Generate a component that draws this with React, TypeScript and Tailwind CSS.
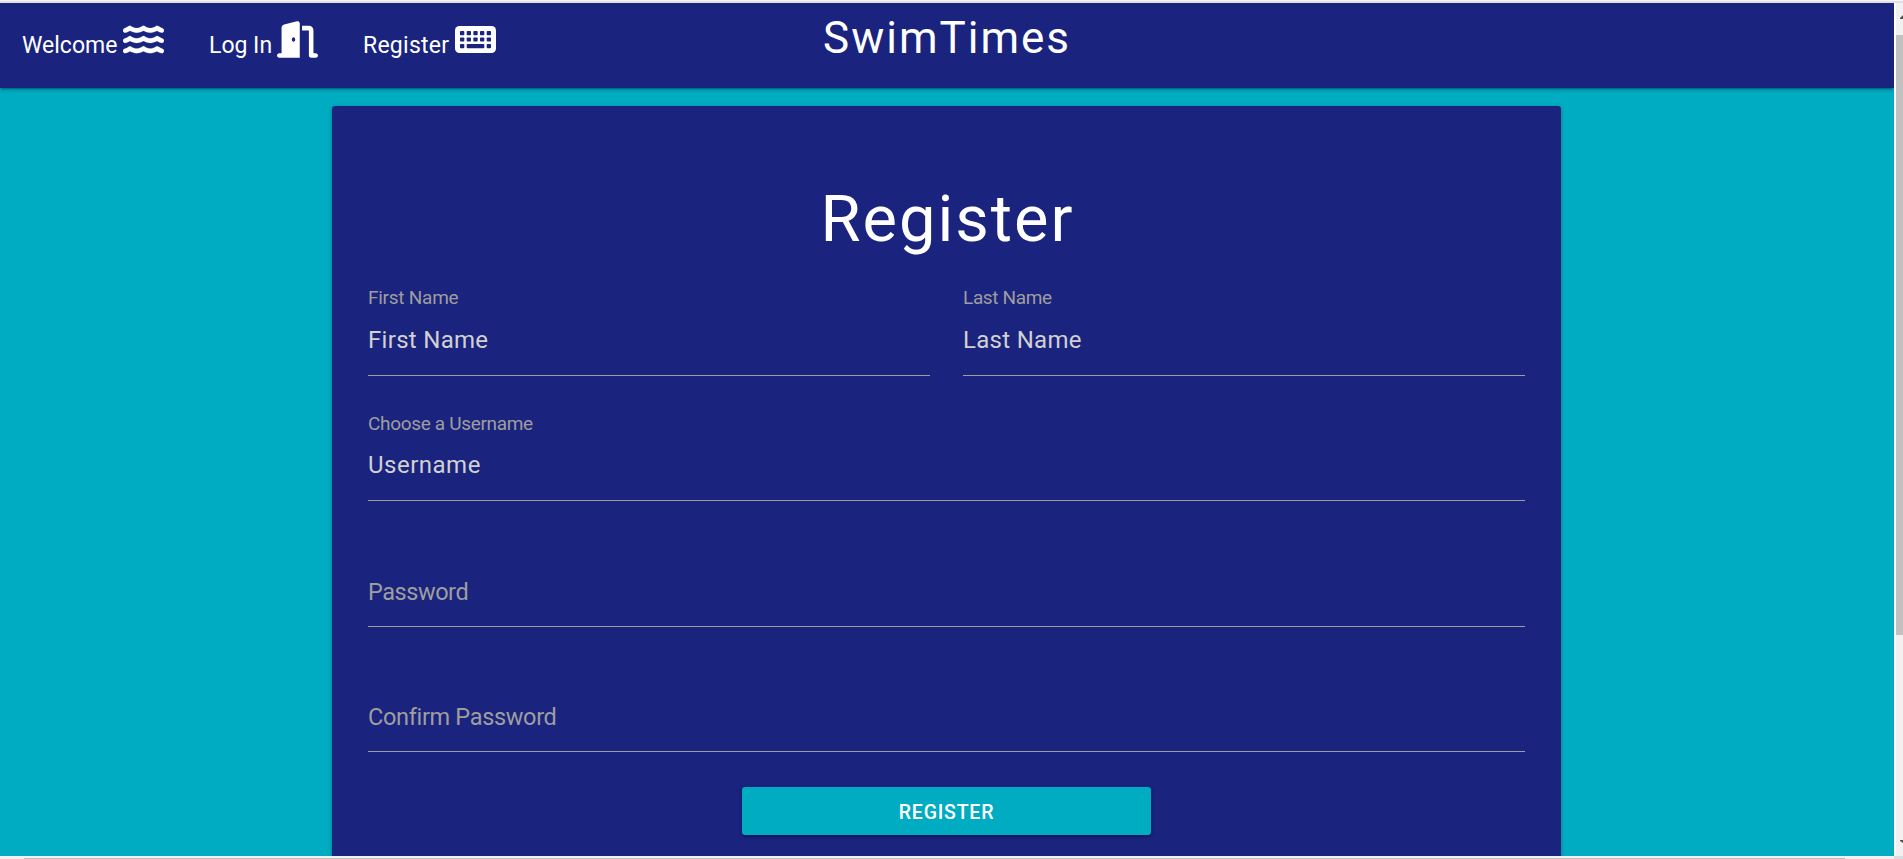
import type { ReactNode } from "react";
import { FaDoorOpen, FaWater } from "react-icons/fa6";

const KEY_COLUMNS = [5, 11.7, 18.35, 25, 31.7];

function KeyboardIcon() {
  return (
    <svg className="h-[37px] w-[41px]" viewBox="0 0 41 37">
      <rect x="0" y="5" width="41" height="27" rx="4.5" fill="currentColor" />
      <g fill="#1a237e">
        {KEY_COLUMNS.map((x) => (
          <g key={x}>
            <rect x={x} y="10.1" width="4.3" height="4.1" rx="0.8" />
            <rect x={x} y="16.5" width="4.3" height="4.1" rx="0.8" />
          </g>
        ))}
        <rect x="5" y="23.1" width="4.3" height="4.1" rx="0.8" />
        <rect x="11.7" y="23.1" width="17.6" height="4.1" rx="0.8" />
        <rect x="31.7" y="23.1" width="4.3" height="4.1" rx="0.8" />
      </g>
    </svg>
  );
}

function NavLink({ text, className, icon }: { text: string; className: string; icon: ReactNode }) {
  return (
    <a href="#" className={`flex items-start whitespace-nowrap text-[23px] leading-none ${className}`}>
      <span className="pt-[13px]">{text}</span>
      {icon}
    </a>
  );
}

type FieldProps = {
  label?: string;
  labelClass?: string;
  value: string;
  valueClass: string;
};

function Field({ label, labelClass = "", value, valueClass }: FieldProps) {
  return (
    <div className="flex flex-1 flex-col whitespace-nowrap border-b border-[#9e9e9e] leading-none">
      <div className={`text-[19px] text-[#9e9e9e] ${labelClass}`}>{label}</div>
      <div className={valueClass}>{value}</div>
    </div>
  );
}

export default function App() {
  return (
    <div className="flex h-[859px] w-[1903px] flex-col overflow-hidden bg-[#f1f1f1] font-['Roboto',sans-serif] text-white">
      <div className="h-[3px] shrink-0 border-t border-[#f5f5f5] bg-[#e0e0e0]" />
      <div className="flex h-[853px] shrink-0">
        <div className="flex w-[1894px] flex-col overflow-hidden bg-[#00acc1]">
          <nav className="z-10 flex h-[85px] shrink-0 items-start bg-[#1a237e] pt-[18px] shadow-[0_2px_2px_0_rgba(0,0,0,0.14),0_3px_1px_-2px_rgba(0,0,0,0.12),0_1px_5px_0_rgba(0,0,0,0.2)]">
            <NavLink text="Welcome" className="ml-[22px] w-[187px] gap-[6px]" icon={<FaWater className="h-[37px] w-[41px]" stroke="currentColor" strokeWidth={3} />} />
            <NavLink text="Log In" className="w-[154px] gap-[5px]" icon={<FaDoorOpen className="h-[37px] w-[41px]" />} />
            <NavLink text="Register" className="w-[460px] gap-[6px] tracking-[0.25px]" icon={<KeyboardIcon />} />
            <a href="#" className="-mt-[5px] text-[44px] leading-none tracking-[2px]">SwimTimes</a>
          </nav>
          <main className="ml-[332px] mt-[18px] flex h-[860px] w-[1229px] shrink-0 flex-col rounded-[3px] bg-[#1a237e] px-9 pt-20 shadow-[0_2px_2px_0_rgba(0,0,0,0.14),0_3px_1px_-2px_rgba(0,0,0,0.12),0_1px_5px_0_rgba(0,0,0,0.2)]">
            <h1 className="h-[102px] pl-[2px] pt-px text-center text-[65px] leading-none tracking-[2px]">Register</h1>
            <div className="flex h-[88px] gap-[33px]">
              <Field label="First Name" labelClass="h-10 tracking-[-0.25px]" value="First Name" valueClass="text-[24px] tracking-[0.3px] text-[#d1d1d1]" />
              <Field label="Last Name" labelClass="h-10 tracking-[-0.35px]" value="Last Name" valueClass="text-[24px] tracking-[0.3px] text-[#d1d1d1]" />
            </div>
            <div className="mt-[38px] flex h-[87px]">
              <Field label="Choose a Username" labelClass="h-[39px] tracking-[-0.33px]" value="Username" valueClass="text-[24px] tracking-[0.5px] text-[#d1d1d1]" />
            </div>
            <div className="mt-[38px] flex h-[88px]">
              <Field labelClass="h-[42px]" value="Password" valueClass="text-[23.5px] tracking-[-0.45px] text-[#9e9e9e]" />
            </div>
            <div className="mt-[38px] flex h-[87px]">
              <Field labelClass="h-[41px]" value="Confirm Password" valueClass="text-[23.5px] tracking-[-0.33px] text-[#9e9e9e]" />
            </div>
            <button className="mx-auto mt-[35px] h-12 w-[409px] rounded-[3px] bg-[#00acc1] pt-[3px] text-[19.5px] font-medium tracking-[0.8px] shadow-[0_2px_2px_0_rgba(0,0,0,0.14),0_3px_1px_-2px_rgba(0,0,0,0.12),0_1px_5px_0_rgba(0,0,0,0.2)]">
              REGISTER
            </button>
          </main>
        </div>
        <div className="flex w-[9px] flex-col items-end border-l-2 border-white bg-[#f1f1f1]">
          <svg className="h-8 w-[7px]" viewBox="0 0 7 32"><path d="M4 16V15L7 12V16Z" fill="#505050" /></svg>
          <div className="h-[600px] w-[7px] bg-[#c1c1c1]" />
          <svg className="mt-auto h-5 w-[7px]" viewBox="0 0 7 20"><path d="M4 4V5L7 7V4Z" fill="#505050" /></svg>
        </div>
      </div>
      <div className="flex h-[3px] items-end bg-[#f1f1f1] pl-6">
        <div className="h-px w-[1821px] bg-[#c1c1c1]" />
        <div className="ml-auto h-[3px] w-[9px] bg-[#dcdcdc]" />
      </div>
    </div>
  );
}
